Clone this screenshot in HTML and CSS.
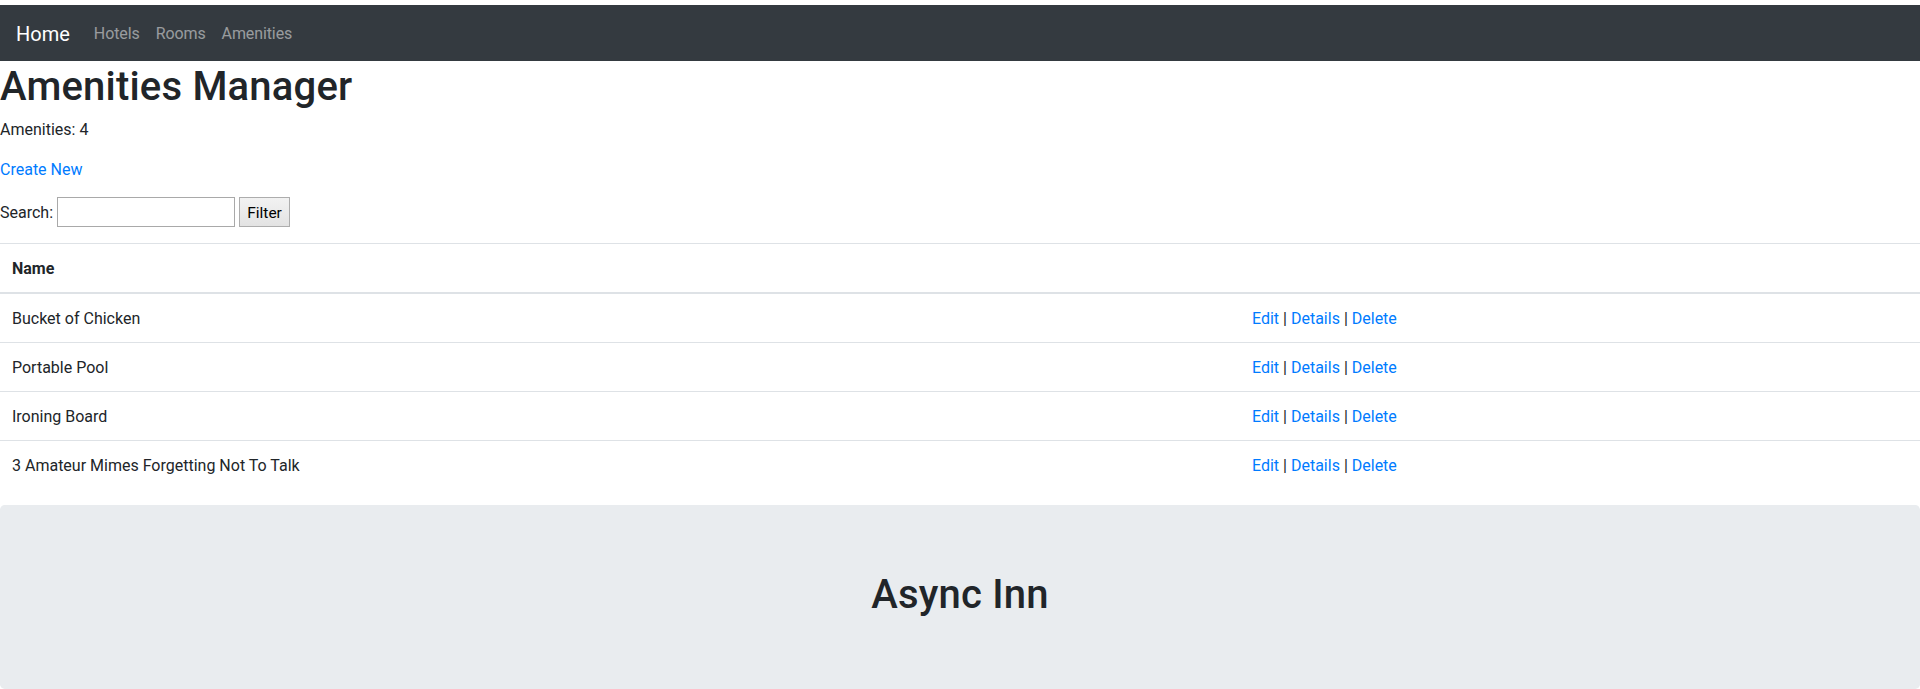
FILE: index.html
```html
<!DOCTYPE html>
<html lang="en">
<head>
<meta charset="utf-8">
<title>Amenities Manager</title>
<link rel="stylesheet" href="styles.css">
</head>
<body>
<nav class="navbar">
  <a class="brand" href="#">Home</a>
  <ul class="nav-links">
    <li><a href="#">Hotels</a></li>
    <li><a href="#">Rooms</a></li>
    <li><a href="#">Amenities</a></li>
  </ul>
</nav>
<main class="content">
  <h1 class="title">Amenities Manager</h1>
  <p class="count">Amenities: 4</p>
  <p class="create"><a href="#">Create New</a></p>
  <form class="search">
    <label class="search-label" for="q">Search:</label>
    <input class="search-input" id="q" type="text">
    <button class="search-btn" type="button">Filter</button>
  </form>
  <table class="table">
    <thead>
      <tr><th class="col-name">Name</th><th></th></tr>
    </thead>
    <tbody>
      <tr><td>Bucket of Chicken</td><td><a href="#">Edit</a> | <a href="#">Details</a> | <a href="#">Delete</a></td></tr>
      <tr><td>Portable Pool</td><td><a href="#">Edit</a> | <a href="#">Details</a> | <a href="#">Delete</a></td></tr>
      <tr><td>Ironing Board</td><td><a href="#">Edit</a> | <a href="#">Details</a> | <a href="#">Delete</a></td></tr>
      <tr><td>3 Amateur Mimes Forgetting Not To Talk</td><td><a href="#">Edit</a> | <a href="#">Details</a> | <a href="#">Delete</a></td></tr>
    </tbody>
  </table>
  <footer class="jumbotron">
    <h1 class="jumbo-title">Async Inn</h1>
  </footer>
</main>
</body>
</html>
```

FILE: styles.css
```css
* { box-sizing: border-box; }
html, body { margin: 0; }
body {
  padding-top: 5px;
  font-family: Roboto, "Open Sans", "Liberation Sans", sans-serif;
  font-size: 16px;
  line-height: 1.5;
  color: #212529;
  background: #fff;
}
a { color: #007bff; text-decoration: none; }

.navbar {
  display: flex;
  align-items: center;
  height: 56px;
  padding: 9px 16px 7px;
  background: #343a40;
}
.brand {
  color: #fff;
  font-size: 20px;
  line-height: 30px;
  padding: 5px 0;
  margin-right: 16px;
}
.nav-links {
  display: flex;
  list-style: none;
  margin: 0;
  padding: 0;
}
.nav-links a {
  display: block;
  padding: 8px;
  color: rgba(255,255,255,.5);
  letter-spacing: -0.1px;
}

.title {
  margin: 0 0 8px;
  padding-top: 2px;
  height: 48px;
  font-size: 40px;
  font-weight: 500;
  line-height: 1.2;
  letter-spacing: 0.2px;
}
.count, .create {
  margin: 0 0 16px;
  padding-top: 1px;
  height: 24px;
}

.search {
  display: flex;
  align-items: center;
  height: 30px;
  margin-bottom: 16px;
}
.search-label { margin-right: 4px; padding-top: 1px; }
.search-input {
  width: 178px;
  height: 30px;
  border: 1px solid #a9a9a9;
  margin: 0 4px 0 0;
  padding: 2px 4px;
  font: inherit;
}
.search-btn {
  width: 51px;
  height: 30px;
  padding: 1px 0 0;
  border: 1px solid #adadad;
  background: linear-gradient(#f2f2f2, #e3e3e3);
  color: #000;
  font-family: inherit;
  font-size: 15.5px;
}

.table {
  width: 100%;
  border-collapse: collapse;
  margin-bottom: 16px;
}
.table th, .table td {
  padding: 13px 12px 11px;
  text-align: left;
  vertical-align: top;
  border-top: 1px solid #dee2e6;
}
.table th { font-weight: 700; border-bottom: 2px solid #dee2e6; }
.col-name { width: 1240px; }

.jumbotron {
  background: #e9ecef;
  border-radius: 4.8px;
  padding: 66px 32px 62px;
  text-align: center;
}
.jumbo-title {
  margin: 0 0 8px;
  font-size: 40px;
  font-weight: 500;
  line-height: 1.2;
  letter-spacing: 0.2px;
}
```
